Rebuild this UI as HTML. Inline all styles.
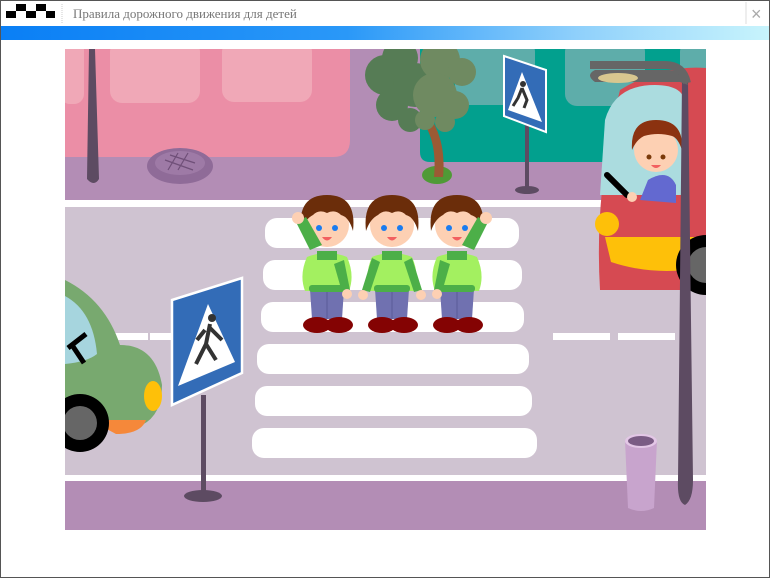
<!DOCTYPE html>
<html><head><meta charset="utf-8"><style>
body{margin:0;width:770px;height:578px;overflow:hidden;background:#fff;font-family:"Liberation Serif",serif}
</style></head><body>
<svg width="770" height="578" viewBox="0 0 770 578" xmlns="http://www.w3.org/2000/svg">
<defs>
<linearGradient id="bar" x1="0" x2="1"><stop offset="0" stop-color="#0a7ff5"/><stop offset="0.45" stop-color="#2a98f8"/><stop offset="0.75" stop-color="#8fd0fb"/><stop offset="1" stop-color="#c8f4fc"/></linearGradient>
<g id="kid">
<path d="M-17 34 h34 l-2 30 h-30z" fill="#7071b0"/>
<line x1="0" y1="36" x2="0" y2="64" stroke="#5a5a98"/>
<path d="M-20 2 q20 -8 40 0 q8 18 2 34 h-44 q-6 -16 2 -34z" fill="#a3f060"/>
<rect x="-18" y="30" width="36" height="7" rx="3" fill="#4caf48"/>
<rect x="-10" y="-4" width="20" height="9" fill="#4caf48"/>
<ellipse cx="-10" cy="70" rx="14" ry="8" fill="#840303"/>
<ellipse cx="12" cy="70" rx="14" ry="8" fill="#840303"/>
<circle cx="0" cy="-30" r="22" fill="#fdd0b3"/>
<path d="M-26 -24 q-4 -36 26 -36 q30 0 26 36 q-4 -14 -12 -16 q-6 -6 -14 -2 q-8 -4 -14 2 q-8 4 -12 16z" fill="#6b2d0a"/>
<circle cx="-8" cy="-27" r="3" fill="#1a7cf0"/><circle cx="8" cy="-27" r="3" fill="#1a7cf0"/>
<path d="M-5 -18 q5 7 10 0z" fill="#f26060"/>
</g>
</defs>
<rect x="0.5" y="0.5" width="769" height="577" fill="#fff" stroke="#555"/>
<g fill="#000"><rect x="6" y="11" width="10" height="7"/><rect x="16" y="4" width="10" height="7"/><rect x="26" y="11" width="10" height="7"/><rect x="36" y="4" width="10" height="7"/><rect x="46" y="11" width="9" height="7"/></g>
<line x1="62" y1="4" x2="62" y2="24" stroke="#ccc" stroke-dasharray="1 1"/>
<text x="73" y="18" font-size="13" fill="#777">Правила дорожного движения для детей</text>
<line x1="746" y1="2" x2="746" y2="24" stroke="#ddd"/>
<text x="751" y="20" font-size="18" fill="#aaa" font-family="Liberation Sans">×</text>
<rect x="1" y="26" width="768" height="14" fill="url(#bar)"/>

<svg x="65" y="49" width="641" height="481" viewBox="65 49 641 481">
<rect x="65" y="49" width="641" height="481" fill="#b38db5"/>
<path d="M65 49 H350 V140 q0 17 -17 17 H65z" fill="#eb8ea6"/>
<rect x="60" y="40" width="24" height="64" rx="10" fill="#f0a8b7"/>
<rect x="110" y="40" width="90" height="63" rx="12" fill="#f0a8b7"/>
<rect x="222" y="40" width="90" height="62" rx="12" fill="#f0a8b7"/>
<path d="M420 49 H706 V162 H430 q-10 0 -10 -10z" fill="#02a08e"/>
<rect x="455" y="40" width="80" height="65" rx="12" fill="#5eadaa"/>
<rect x="565" y="40" width="80" height="66" rx="12" fill="#5eadaa"/>
<rect x="680" y="40" width="40" height="66" rx="12" fill="#5eadaa"/>
<ellipse cx="180" cy="166" rx="33" ry="18" fill="#8f6b98"/>
<ellipse cx="180" cy="163" rx="25" ry="12" fill="#9e7aa6"/>
<path d="M165 160 l28 10 M170 155 l25 8 M178 153 l-10 17 M188 153 l-10 17" stroke="#6f4f78" stroke-width="1.2"/>
<path d="M89 49 h6 l4 130 q-5 8 -12 0z" fill="#5d4b62"/>
<ellipse cx="437" cy="175" rx="15" ry="9" fill="#4f9a36"/>
<path d="M425 125 q12 20 9 52 l9 0 q3 -32 -10 -55z" fill="#9b5a34"/>
<g fill="#567c55"><circle cx="385" cy="75" r="20"/><circle cx="400" cy="58" r="18"/><circle cx="392" cy="105" r="16"/><circle cx="410" cy="120" r="12"/><circle cx="415" cy="85" r="22"/></g>
<g fill="#6f8a61"><circle cx="440" cy="60" r="20"/><circle cx="462" cy="72" r="14"/><circle cx="435" cy="95" r="22"/><circle cx="455" cy="105" r="14"/><circle cx="425" cy="120" r="10"/><circle cx="445" cy="122" r="10"/></g>
<rect x="525" y="125" width="4" height="65" fill="#5d4b62"/>
<ellipse cx="527" cy="190" rx="12" ry="4" fill="#5d4b62"/>
<path d="M504 56 l42 14 v62 l-42 -16z" fill="#336cb7" stroke="#fff" stroke-width="2"/>
<path d="M522 72 l-14 38 l34 12z" fill="#fff"/>
<circle cx="523" cy="84" r="3" fill="#333"/>
<path d="M522 88 l-4 10 l-5 8 M522 88 l5 12 l-3 8" stroke="#333" stroke-width="3" fill="none"/>
<rect x="65" y="200" width="641" height="7" fill="#fff"/>
<rect x="65" y="207" width="641" height="268" fill="#cfc3d1"/>
<rect x="65" y="475" width="641" height="6" fill="#fff"/>
<g fill="#fff"><rect x="100" y="333" width="48" height="7"/><rect x="150" y="333" width="45" height="7"/><rect x="553" y="333" width="57" height="7"/><rect x="618" y="333" width="57" height="7"/></g>
<g fill="#fff"><rect x="265" y="218" width="254" height="30" rx="12"/><rect x="263" y="260" width="259" height="30" rx="12"/><rect x="261" y="302" width="263" height="30" rx="12"/><rect x="257" y="344" width="272" height="30" rx="12"/><rect x="255" y="386" width="277" height="30" rx="12"/><rect x="252" y="428" width="285" height="30" rx="12"/></g>
<use href="#kid" x="327" y="255"/>
<use href="#kid" x="392" y="255"/>
<use href="#kid" x="457" y="255"/>
<g fill="#4caf48"><path d="M310 250 l-14 -28 l10 -5 l16 28z"/><path d="M474 250 l14 -28 l-10 -5 l-16 28z"/><path d="M372 258 l-10 32 l8 2 l10 -30z"/><path d="M412 258 l10 32 l-8 2 l-10 -30z"/><path d="M344 260 l6 30 l-8 2 l-8 -28z"/><path d="M440 260 l-6 30 l8 2 l8 -28z"/></g>
<g fill="#fdd0b3"><circle cx="298" cy="218" r="6"/><circle cx="486" cy="218" r="6"/><circle cx="363" cy="295" r="5"/><circle cx="421" cy="295" r="5"/><circle cx="347" cy="294" r="5"/><circle cx="437" cy="294" r="5"/></g>
<path d="M65 280 q40 20 55 65 q35 0 42 40 q0 30 -20 40 h-77z" fill="#78a96f"/>
<path d="M65 296 q28 15 32 58 q-10 8 -32 10z" fill="#a6d5de"/>
<path d="M68 348 l18 -14 M72 345 l12 18" stroke="#000" stroke-width="5"/>
<path d="M90 420 h56 q-5 14 -30 14 z" fill="#f5883a"/>
<circle cx="80" cy="423" r="29" fill="#000"/>
<circle cx="80" cy="423" r="17" fill="#666"/>
<ellipse cx="153" cy="396" rx="9" ry="15" fill="#fec009"/>
<rect x="201" y="395" width="5" height="100" fill="#5d4b62"/>
<ellipse cx="203" cy="496" rx="19" ry="6" fill="#5d4b62"/>
<path d="M172 300 l70 -22 v95 l-70 32z" fill="#336cb7" stroke="#fff" stroke-width="2.5"/>
<path d="M208 304 l-30 82 l57 -24z" fill="#fff"/>
<circle cx="212" cy="318" r="4" fill="#333"/>
<path d="M210 324 l-4 20 l-10 20 M206 344 l10 16 M210 328 l12 12 M205 330 l-8 10" stroke="#333" stroke-width="4" fill="none"/>
<path d="M625 440 h32 l-3 68 q-13 6 -26 0z" fill="#c8a4cd"/>
<ellipse cx="641" cy="441" rx="16" ry="7" fill="#e3c7e6"/>
<ellipse cx="641" cy="441" rx="13" ry="5" fill="#7a5c84"/>
<path d="M620 90 q40 -25 86 -22 V290 H600 q-6 -100 20 -200z" fill="#d64a52"/>
<path d="M605 120 q10 -35 50 -35 q30 0 30 20 V195 H600z" fill="#abdcdf"/>
<path d="M605 237 h101 v30 q-50 10 -95 -5z" fill="#fec009"/>
<circle cx="607" cy="224" r="12" fill="#fec009"/>
<circle cx="706" cy="265" r="30" fill="#000"/><circle cx="706" cy="265" r="18" fill="#666"/>
<path d="M640 200 l8 -20 q20 -12 28 5 v18z" fill="#6369d0"/>
<circle cx="656" cy="150" r="22" fill="#fdd0b3"/>
<path d="M632 150 q-2 -30 24 -30 q28 0 26 30 q-4 -12 -10 -14 q-14 -4 -28 0 q-8 4 -12 14z" fill="#8b3210"/>
<circle cx="649" cy="157" r="2.5" fill="#7a3a0a"/><circle cx="663" cy="157" r="2.5" fill="#7a3a0a"/>
<path d="M651 165 q5 6 10 0z" fill="#f26060"/>
<path d="M607 175 l20 20" stroke="#000" stroke-width="6" stroke-linecap="round"/>
<circle cx="632" cy="197" r="5" fill="#fdd0b3"/>
<path d="M678 480 l4 -400 h6 l5 400 q0 20 -8 25 q-8 -3 -7 -25z" fill="#5d4b62"/>
<path d="M688 85 q-5 -15 -20 -15 H595 q-10 5 0 12 H680z" fill="#666"/>
<path d="M590 65 h75 q18 0 22 18" stroke="#666" stroke-width="8" fill="none"/>
<ellipse cx="618" cy="78" rx="20" ry="5" fill="#d8c78f"/>
</svg>
</svg>
</body></html>
